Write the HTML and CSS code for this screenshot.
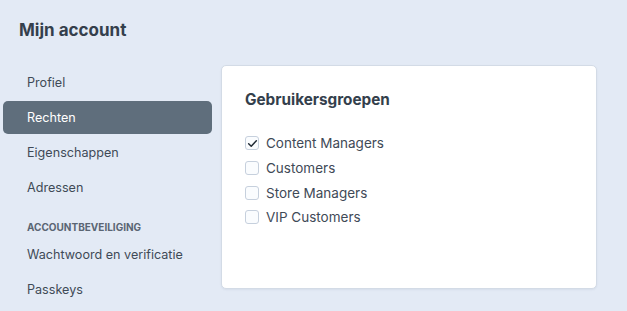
FILE: index.html
```html
<!DOCTYPE html>
<html lang="nl">

<head>
    <meta charset="UTF-8">
    <meta name="viewport" content="width=device-width, initial-scale=1.0">
    <title>Mijn account</title>
    <link rel="stylesheet" href="styles.css">
</head>

<body>
    <div class="page">
        <h1 class="page-title">Mijn account</h1>

        <div class="layout">
            <nav class="sidebar">
                <ul class="nav-list">
                    <li><a class="nav-link" href="#">Profiel</a></li>
                    <li><a class="nav-link active" href="#">Rechten</a></li>
                    <li><a class="nav-link" href="#">Eigenschappen</a></li>
                    <li><a class="nav-link" href="#">Adressen</a></li>
                </ul>
                <div class="nav-heading">Accountbeveiliging</div>
                <ul class="nav-list">
                    <li><a class="nav-link" href="#">Wachtwoord en verificatie</a></li>
                    <li><a class="nav-link" href="#">Passkeys</a></li>
                </ul>
            </nav>

            <section class="card">
                <h2 class="card-title">Gebruikersgroepen</h2>
                <ul class="group-list">
                    <li>
                        <label class="check">
                            <span class="box checked">
                                <svg width="11" height="11" viewBox="0 0 12 12">
                                    <path d="M1.8 6.3 L4.6 9 L10.2 3" fill="none" stroke="#1f2933" stroke-width="1.6" stroke-linecap="round" stroke-linejoin="round"/>
                                </svg>
                            </span>
                            Content Managers
                        </label>
                    </li>
                    <li><label class="check"><span class="box"></span>Customers</label></li>
                    <li><label class="check"><span class="box"></span>Store Managers</label></li>
                    <li><label class="check"><span class="box"></span>VIP Customers</label></li>
                </ul>
            </section>
        </div>
    </div>
</body>

</html>
```

FILE: styles.css
```css
body {
    font-family: Inter, "Noto Sans", Arial, sans-serif;
    background-color: #e3eaf5;
    color: #3f4a57;
    margin: 0;
    padding: 0;
}

.page {
    padding: 0 3px;
}

.page-title {
    margin: 0;
    padding: 19px 16px 0;
    font-size: 17px;
    line-height: 22px;
    font-weight: 700;
    color: #343f4c;
}

.layout {
    display: flex;
    gap: 9px;
    margin-top: 24px;
}

.sidebar {
    width: 209px;
    flex-shrink: 0;
    padding-top: 1px;
}

.nav-list {
    list-style-type: none;
    margin: 0;
    padding: 0;
    display: flex;
    flex-direction: column;
    gap: 2px;
}

.nav-link {
    display: block;
    height: 33px;
    line-height: 33px;
    padding: 0 24px;
    border-radius: 5px;
    font-size: 12.6px;
    color: #3f4a57;
    text-decoration: none;
}

.nav-link.active {
    background-color: #5f6e7c;
    color: #ffffff;
}

.nav-heading {
    margin: 16px 0 4px;
    padding: 0 24px;
    font-size: 10px;
    line-height: 14px;
    font-weight: 700;
    text-transform: uppercase;
    color: #5a6573;
}

.card {
    width: 376px;
    height: 224px;
    box-sizing: border-box;
    background-color: #ffffff;
    border: 1px solid #d3dbe6;
    border-radius: 5px;
    box-shadow: 0 1px 2px rgba(60, 80, 110, 0.08);
    padding: 23px 23px;
}

.card-title {
    margin: 0 0 20px;
    font-size: 15.3px;
    line-height: 22px;
    font-weight: 700;
    color: #343f4c;
}

.group-list {
    list-style-type: none;
    margin: 0;
    padding: 0;
}

.check {
    display: flex;
    align-items: center;
    gap: 7px;
    height: 24.7px;
    font-size: 13.5px;
    color: #3f4a57;
}

.box {
    width: 14px;
    height: 14px;
    box-sizing: border-box;
    border: 1px solid #c6d0dd;
    border-radius: 3px;
    background-color: #fafcfe;
    display: flex;
    align-items: center;
    justify-content: center;
}
```
